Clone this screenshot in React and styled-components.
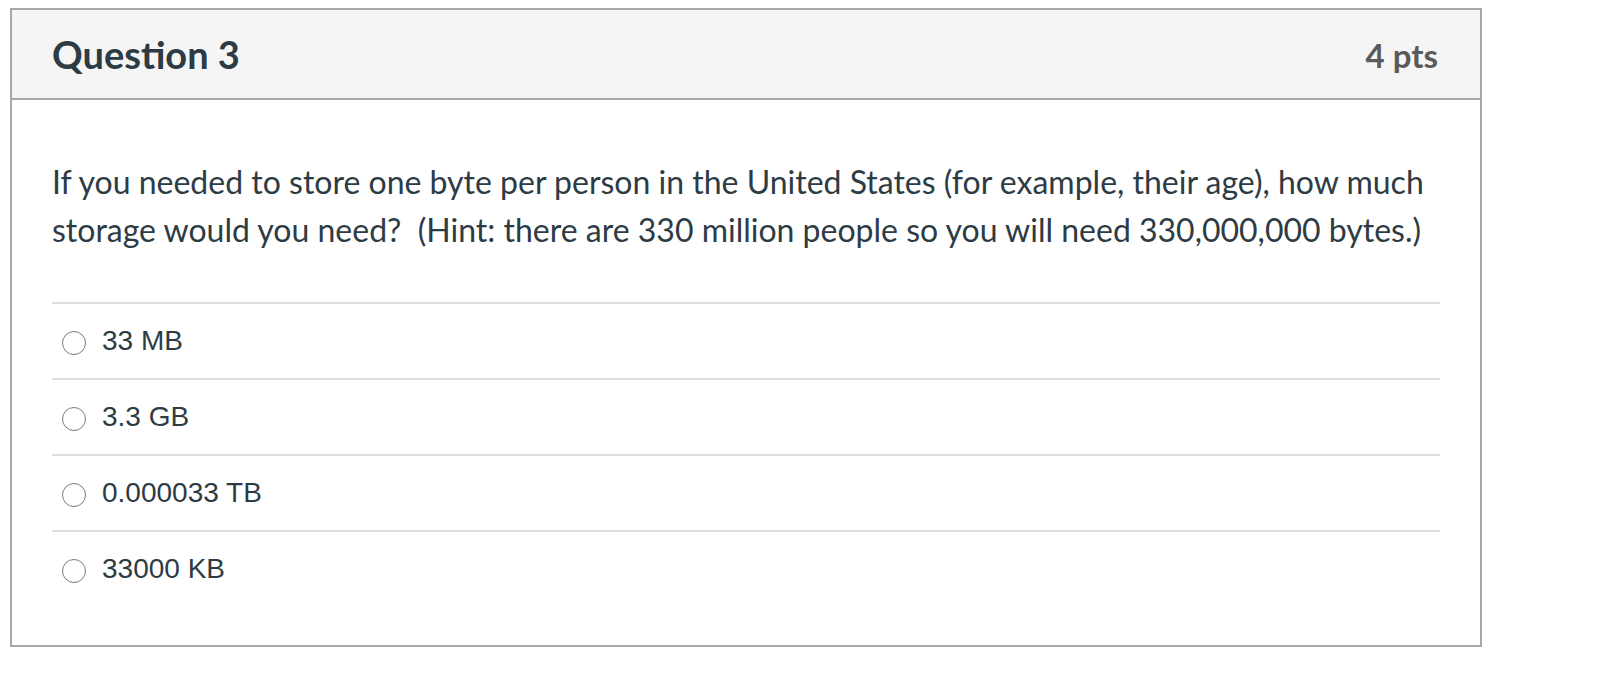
import styled, { createGlobalStyle } from "styled-components";

const GlobalStyle = createGlobalStyle`
body {
  margin: 0;
  background: #ffffff;
  font-family: Lato, "Noto Sans", sans-serif;
  color: #2d3b45;
}
`;

const Card = styled.div`
margin: 8px 0 0 10px;
width: 1468px;
border: 2px solid #a8a8a8;
background: #ffffff;
`;

const Header = styled.div`
display: flex;
align-items: center;
justify-content: space-between;
height: 88px;
padding: 0 42px 0 40px;
background: #f5f5f5;
border-bottom: 2px solid #a8a8a8;
`;

const Title = styled.h2`
margin: 0;
font-family: Lato, sans-serif;
font-weight: 700;
font-size: 38px;
color: #2d3b45;
`;

const Points = styled.span`
font-family: Lato, sans-serif;
font-weight: 700;
font-size: 33px;
color: #5a5a5a;
padding-top: 2px;
`;

const Body = styled.div`
padding: 58px 40px 39px 40px;
`;

const QuestionText = styled.p`
margin: 0 0 48px 0;
font-family: Lato, sans-serif;
font-size: 32px;
line-height: 48px;
color: #2d3b45;
`;

const Answers = styled.div`
display: flex;
flex-direction: column;
`;

const Answer = styled.label`
display: flex;
align-items: center;
gap: 16px;
height: 74px;
padding-left: 10px;
border-top: 2px solid #dddddd;
cursor: pointer;
`;

const Radio = styled.span`
flex: none;
width: 24px;
height: 24px;
box-sizing: border-box;
border-radius: 50%;
border: 1.6px solid #7a7a7a;
background: #ffffff;
margin-top: 4px;
`;

const AnswerText = styled.span`
font-family: "Liberation Sans", Arial, sans-serif;
font-size: 28px;
color: #2d3b45;
`;

const answers = ["33 MB", "3.3 GB", "0.000033 TB", "33000 KB"];

const App = () => {
    return (
        <>
            <GlobalStyle/>
            <Card>
                <Header>
                    <Title>Question 3</Title>
                    <Points>4 pts</Points>
                </Header>
                <Body>
                    <QuestionText>
                        If you needed to store one byte per person in the United States (for example, their age), how much storage would you need?&nbsp; (Hint: there are 330 million people so you will need 330,000,000 bytes.)
                    </QuestionText>
                    <Answers>
                        {answers.map(a =>
                            <Answer key={a}>
                                <Radio/>
                                <AnswerText>{a}</AnswerText>
                            </Answer>
                        )}
                    </Answers>
                </Body>
            </Card>
        </>
    )
};

export default App;
